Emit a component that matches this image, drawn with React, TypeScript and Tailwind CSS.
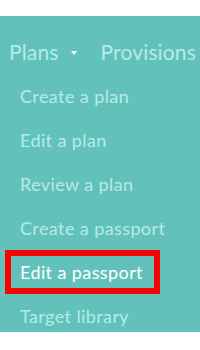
import React from "react";

const items = [
  "Create a plan",
  "Edit a plan",
  "Review a plan",
  "Create a passport",
  "Edit a passport",
  "Target library",
];

export default function App() {
  return (
    <div className="w-[200px] h-[350px] bg-white" style={{ fontFamily: "Lato, 'Open Sans', sans-serif" }}>
      <div className="h-[16px]" />
      <div className="h-[316px] overflow-hidden bg-[#62c2bb]">
        <div className="h-[58px] flex items-start pt-[22px] pl-[9px] text-[21px] leading-[28px] tracking-[0.15px] text-[#b6ebe6]">
          <span>Plans</span>
          <span className="ml-[12px] mt-[13px] w-0 h-0 border-l-[3px] border-r-[3px] border-t-[4px] border-l-transparent border-r-transparent border-t-white" />
          <span className="ml-[24px]">Provisions</span>
        </div>
        <ul className="flex flex-col">
          {items.map((t) => {
            const active = t === "Edit a passport";
            return active ? (
              <li key={t} className="h-[44px] ml-[5px] w-[155px] border-[6px] border-[#ff0000] flex items-center pl-[9px] text-[18px] tracking-[0.4px] text-white">
                {t}
              </li>
            ) : (
              <li key={t} className="h-[44px] flex items-center pl-[20px] text-[18px] tracking-[0.4px] text-[#b6ebe6]">
                {t}
              </li>
            );
          })}
        </ul>
      </div>
    </div>
  );
}
